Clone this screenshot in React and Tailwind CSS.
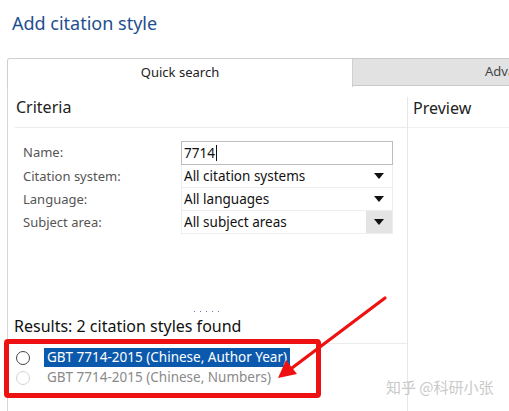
import React from 'react';

// Dropdown arrow used in the select rows.
function Caret() {
    return (
        <svg width="10" height="6" viewBox="0 0 10 6" className="block">
            <path d="M0 0 L10 0 L5 6 Z" fill="#111" />
        </svg>
    );
}

const SELECTS = [
    { label: 'Citation system:', value: 'All citation systems' },
    { label: 'Language:', value: 'All languages' },
    { label: 'Subject area:', value: 'All subject areas', shaded: true },
];

export default function App() {
    return (
        <div className="relative w-[509px] h-[411px] overflow-hidden bg-white font-['Noto_Sans','Noto_Sans_CJK_SC',sans-serif]">
            {/* Dialog title */}
            <h1 className="pl-[12px] pt-[11px] h-[58px] text-[18px] leading-[24px] text-[#1e4f8f]">Add citation style</h1>

            {/* Tabs */}
            <div className="flex ml-[7px] h-[29px]">
                <div className="w-[346px] h-[29px] bg-white border-t border-l border-r border-[#cfcfcf] rounded-tl-[3px] flex items-center justify-center text-[13px] text-[#222]">
                    Quick search
                </div>
                <div className="flex-1 h-[28px] bg-[#e2e2e2] border-t border-b border-[#c8c8c8] flex items-center pl-[132px] overflow-hidden whitespace-nowrap text-[13px] text-[#444]">
                    Advanced search
                </div>
            </div>

            {/* Panel body */}
            <div className="flex ml-[7px] h-[324px] border-l border-[#d6d6d6]">
                {/* Left column: criteria and results */}
                <div className="w-[399px] flex flex-col">
                    <div className="pl-[8px] pt-[9px] h-[40px] text-[16px] leading-[22px] text-[#222]">Criteria</div>
                    <div className="ml-[7px] h-px bg-[#ececec]" />

                    <div className="pl-[15px] pt-[13px] flex flex-col">
                        <div className="flex items-center h-[24px]">
                            <span className="w-[158px] text-[13px] text-[#555]">Name:</span>
                            <div className="w-[212px] h-[24px] border border-[#bdbdbd] flex items-center pl-[2px] text-[13.5px] text-[#111]">
                                7714<span className="w-px h-[16px] bg-[#111] ml-px" />
                            </div>
                        </div>
                        {SELECTS.map(row => (
                            <div key={row.label} className="flex items-center h-[23px]">
                                <span className="w-[158px] text-[13px] text-[#555]">{row.label}</span>
                                <div className="w-[212px] h-[23px] border-b border-x border-[#eeeeee] flex items-center text-[13.5px] text-[#111]">
                                    <span className="flex-1 pl-[2px]">{row.value}</span>
                                    <span className={`w-[26px] h-full flex items-center justify-center ${row.shaded ? 'bg-[#e4e4e4]' : ''}`}>
                                        <Caret />
                                    </span>
                                </div>
                            </div>
                        ))}
                    </div>

                    {/* Splitter grip */}
                    <div className="flex justify-center mt-[73px] h-[6px] gap-[5px] pr-[2px]">
                        {[0, 1, 2, 3, 4].map(i => (
                            <span key={i} className="w-px h-px mt-[4px] bg-[#6b7fa6]" />
                        ))}
                    </div>

                    <div className="pl-[6px] mt-[1px] h-[24px] text-[16px] leading-[24px] text-[#111]">Results: 2 citation styles found</div>
                    <div className="mt-[5px] h-px bg-[#ececec]" />

                    {/* Result list */}
                    <div className="pl-[8px] pt-[4px] flex flex-col">
                        <div className="flex items-center h-[19px]">
                            <span className="w-[14px] h-[14px] rounded-full border border-[#444] bg-white" />
                            <span className="ml-[14px] px-[3px] h-[19px] flex items-center bg-[#0b59ad] text-white text-[13.5px]">
                                GBT 7714-2015 (Chinese, Author Year)
                            </span>
                        </div>
                        <div className="flex items-center h-[19px] mt-[1px]">
                            <span className="w-[14px] h-[14px] rounded-full border border-[#d4d4d4] bg-white" />
                            <span className="ml-[14px] px-[3px] text-[#8a8a8a] text-[13.5px]">
                                GBT 7714-2015 (Chinese, Numbers)
                            </span>
                        </div>
                    </div>
                </div>

                {/* Right column: preview */}
                <div className="flex-1 border-l border-[#e6e6e6] mt-[10px]">
                    <div className="pl-[5px] h-[30px] text-[16px] leading-[22px] text-[#222]">Preview</div>
                    <div className="h-px bg-[#f0f0f0]" />
                </div>
            </div>

            {/* Red annotation box */}
            <div className="absolute left-[4px] top-[339px] w-[317px] h-[59px] border-[5px] border-[#ee1111] rounded-[4px]" />

            {/* Red annotation arrow */}
            <svg className="absolute left-0 top-0" width="509" height="411" viewBox="0 0 509 411">
                <line x1="385" y1="298" x2="284" y2="374" stroke="#ee1111" strokeWidth="3.2" strokeLinecap="round" />
                <path d="M278 378 L286 360 L297 374 Z" fill="#ee1111" />
            </svg>

            {/* Watermark */}
            <div className="absolute left-[386px] top-[376px] text-[15px] text-[#c9c9c9] font-['Noto_Sans_CJK_SC',sans-serif]">
                知乎 @科研小张
            </div>
        </div>
    );
}
